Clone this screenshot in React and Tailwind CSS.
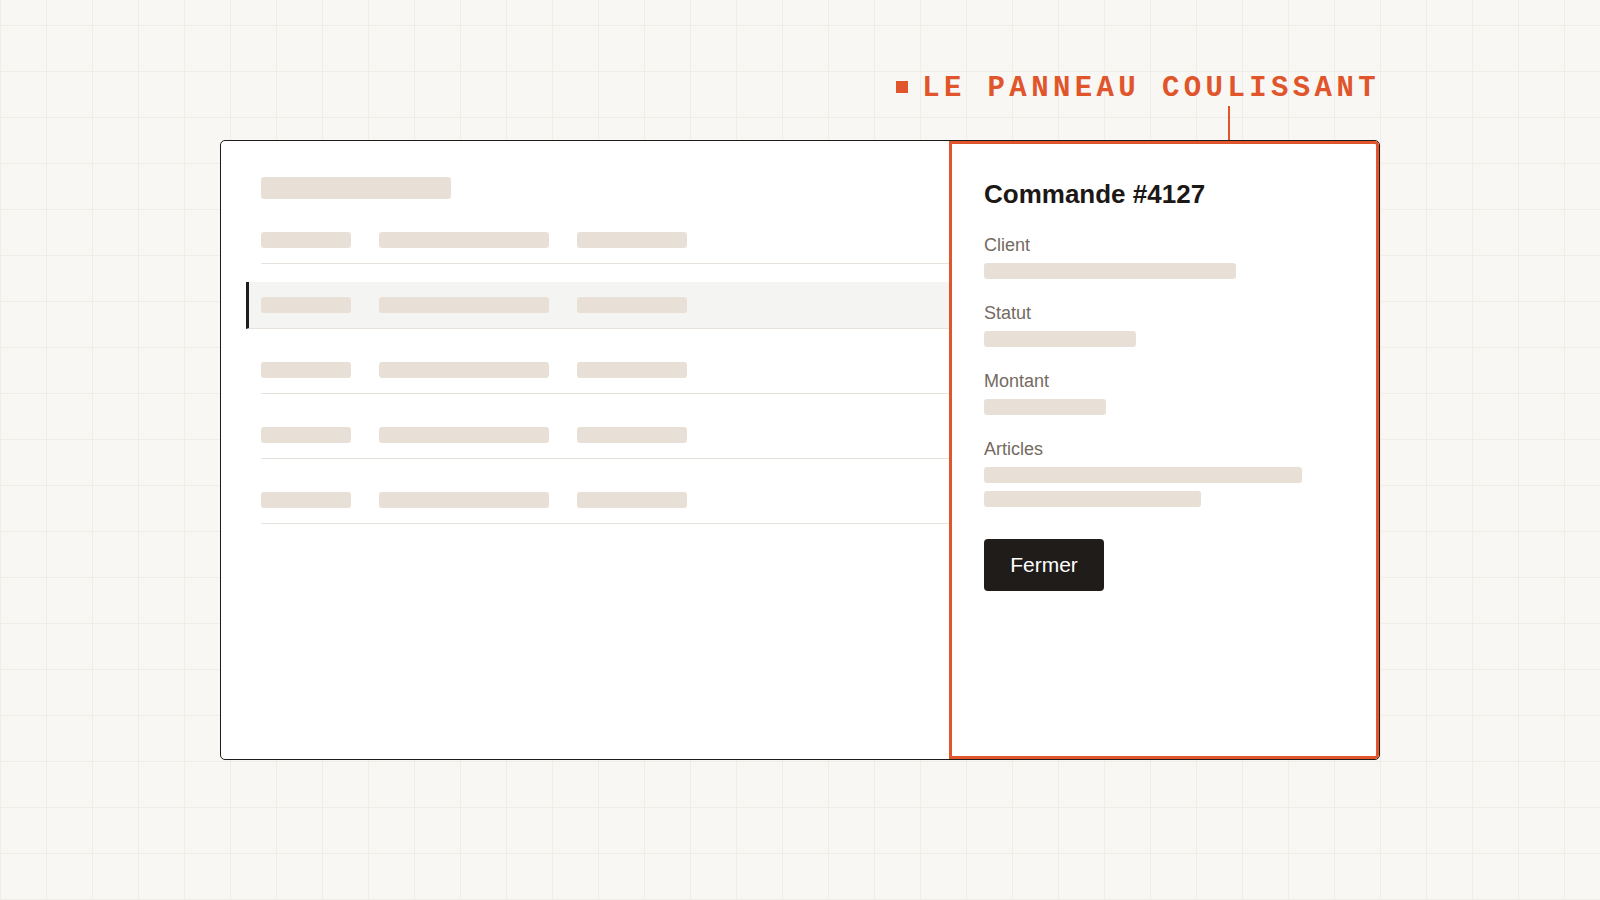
import React from "react";

const rows = [0, 1, 2, 3, 4];

// grey placeholder block used all over the mock
const Bar = ({ className = "" }) => (
  <div className={`h-4 rounded-[3px] bg-[#e8e0d6] ${className}`} />
);

const Field = ({ label, children }) => (
  <div className="flex flex-col">
    <span className="text-[18px] leading-[28px] text-[#746a61]">{label}</span>
    <div className="mt-1 flex flex-col gap-2">{children}</div>
  </div>
);

const App = () => {
  return (
    <div className="flex h-[900px] w-full items-center justify-center bg-[#f8f7f3] bg-[linear-gradient(to_right,#efede8_1px,transparent_1px),linear-gradient(to_bottom,#efede8_1px,transparent_1px)] bg-[size:46px_46px] bg-[position:0_25px] font-['Liberation_Sans',Arial,sans-serif]">
      <div className="relative h-[620px] w-[1160px]">
        {/* annotation */}
        <div className="absolute right-0 top-[-66px] flex items-center gap-[14px]">
          <span className="mb-[3px] h-3 w-3 bg-[#e0552b]" />
          <span className="font-['Liberation_Mono',monospace] text-[29px] font-bold leading-none tracking-[4.4px] text-[#e0552b]">
            LE PANNEAU COULISSANT
          </span>
        </div>
        <div className="absolute left-[1008px] top-[-34px] h-[34px] w-[2px] bg-[#e0552b]" />

        <div className="flex h-full w-full overflow-hidden rounded-[5px] border border-[#1f1b18] bg-white">
          {/* list behind the panel */}
          <div className="flex min-w-0 flex-1 flex-col gap-[18px] pl-10 pt-9">
            <div className="h-[22px] w-[190px] rounded-[3px] bg-[#e8e0d6]" />
            {rows.map((r) => (
              <div
                key={r}
                className={
                  r === 1
                    ? "-ml-[15px] flex gap-7 border-b border-l-[3px] border-b-[#e6e1da] border-l-[#201c19] bg-[#f4f4f3] py-[15px] pl-3"
                    : "flex gap-7 border-b border-[#e6e1da] py-[15px]"
                }
              >
                <Bar className="w-[90px]" />
                <Bar className="w-[170px]" />
                <Bar className="w-[110px]" />
              </div>
            ))}
          </div>

          {/* sliding panel */}
          <div className="flex w-[430px] shrink-0 flex-col rounded-r-[4px] border-[3px] border-[#e0552b] px-8 pt-[34px]">
            <h2 className="mb-[21px] text-[26px] font-bold leading-[32px] text-[#1c1815]">
              Commande #4127
            </h2>
            <div className="flex flex-col gap-5">
              <Field label="Client">
                <Bar className="w-[252px]" />
              </Field>
              <Field label="Statut">
                <Bar className="w-[152px]" />
              </Field>
              <Field label="Montant">
                <Bar className="w-[122px]" />
              </Field>
              <Field label="Articles">
                <Bar className="w-[318px]" />
                <Bar className="w-[217px]" />
              </Field>
            </div>
            <button className="mt-8 flex h-[52px] w-[120px] items-center justify-center rounded-[4px] bg-[#201c19] text-[21px] text-white">
              Fermer
            </button>
          </div>
        </div>
      </div>
    </div>
  );
};

export default App;
